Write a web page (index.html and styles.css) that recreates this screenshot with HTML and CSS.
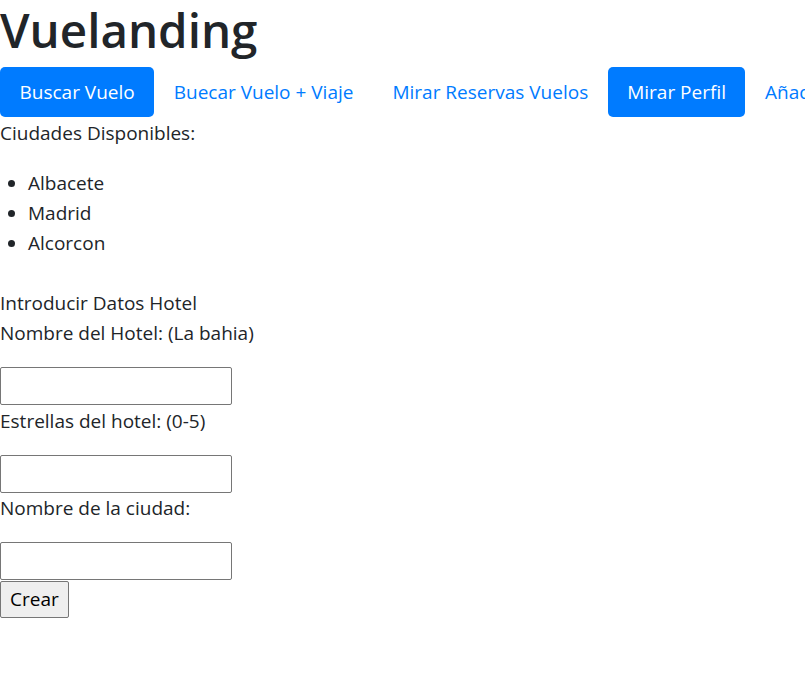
FILE: index.html
```html
<!DOCTYPE html>
<html lang="es">
<head>
<meta charset="utf-8">
<title>Vuelanding</title>
<link rel="stylesheet" href="styles.css">
</head>
<body>
<h1 class="title">Vuelanding</h1>
<ul class="nav">
  <li><a class="nav-link active" href="#">Buscar Vuelo</a></li>
  <li><a class="nav-link" href="#">Buecar Vuelo + Viaje</a></li>
  <li><a class="nav-link" href="#">Mirar Reservas Vuelos</a></li>
  <li><a class="nav-link active" href="#">Mirar Perfil</a></li>
  <li><a class="nav-link" href="#">Añadir Hotel</a></li>
</ul>
<p class="para">Ciudades Disponibles:</p>
<ul class="cities">
  <li>Albacete</li>
  <li>Madrid</li>
  <li>Alcorcon</li>
</ul>
<form class="form">
  <div class="form-title">Introducir Datos Hotel</div>
  <p class="label">Nombre del Hotel: (La bahia)</p>
  <input class="field" type="text">
  <p class="label">Estrellas del hotel: (0-5)</p>
  <input class="field" type="text">
  <p class="label">Nombre de la ciudad:</p>
  <input class="field" type="text">
  <button class="btn" type="button">Crear</button>
</form>
</body>
</html>
```
FILE: styles.css
```css
html, body {
  margin: 0;
  padding: 0;
}
body {
  font-family: "Open Sans", "Noto Sans", sans-serif;
  font-size: 19px;
  line-height: 30px;
  color: #212529;
  background: #fff;
  overflow: hidden;
}
.title {
  font-size: 47.5px;
  font-weight: 600;
  line-height: 60px;
  margin: 0 0 7px;
}
.nav {
  display: flex;
  flex-wrap: nowrap;
  list-style: none;
  margin: 0;
  padding: 0;
  white-space: nowrap;
}
.nav-link {
  display: block;
  padding: 10px 19.5px;
  color: #007bff;
  text-decoration: none;
  border-radius: 5px;
}
.nav-link.active {
  background: #007bff;
  color: #fff;
}
.para {
  margin: 1px 0 20px;
}
.cities {
  margin: 0 0 30px;
  padding: 0 0 0 28px;
}
.form {
  margin: 0;
}
.label {
  margin: 0 0 19px;
}
.field {
  display: block;
  box-sizing: border-box;
  width: 232px;
  height: 38px;
  margin: 0 0 0.5px;
  padding: 1px 2px;
  border: 1px solid #767676;
  border-radius: 2px;
  font: inherit;
  background: #fff;
}
.btn {
  display: block;
  box-sizing: border-box;
  height: 37px;
  margin: 0;
  padding: 0 9px;
  font: inherit;
  color: #000;
  background: #efefef;
  border: 1px solid #767676;
  border-radius: 2px;
}
```
